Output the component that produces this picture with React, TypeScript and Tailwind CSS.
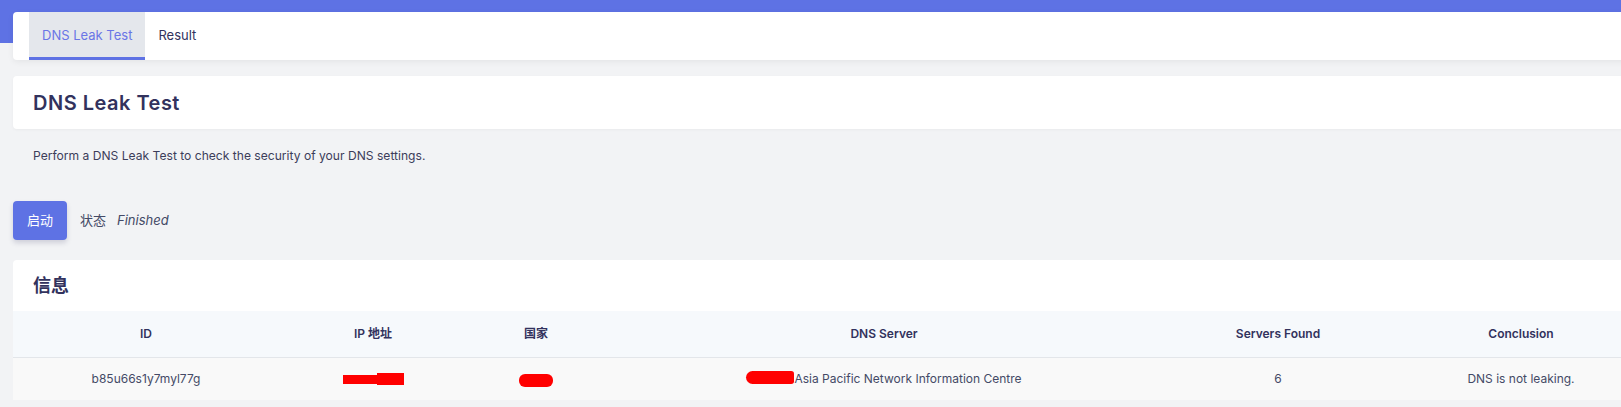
const columns = [
  { key: "id", label: "ID", width: "w-[266px]" },
  { key: "ip", label: "IP 地址", width: "w-[188px]" },
  { key: "country", label: "国家", width: "w-[138px]" },
  { key: "dns", label: "DNS Server", width: "w-[558px]" },
  { key: "found", label: "Servers Found", width: "w-[230px]" },
  { key: "conclusion", label: "Conclusion", width: "w-[256px]" },
];

function Redacted({ className }: { className: string }) {
  return <span className={`inline-block bg-[#ff0000] ${className}`} />;
}

export default function App() {
  return (
    <div
      className="h-[407px] w-full overflow-hidden bg-[#f2f3f5]"
      style={{ fontFamily: 'Inter, "Noto Sans CJK SC", sans-serif' }}
    >
      <div className="w-[1662px]">
        <div className="h-[43px] bg-[#5e72e4]" />

        <div className="-mt-[31px] px-[13px]">
          {/* tabs */}
          <div className="flex h-[48px] rounded-[4px] bg-white pl-[16px] shadow-[0_2px_6px_rgba(0,0,0,0.06)]">
            <div className="flex h-full items-center border-b-[3px] border-[#5e72e4] bg-[#e4e7ec] px-[13px] pt-[3px] text-[13px] text-[#6a75e6]">
              DNS Leak Test
            </div>
            <div className="flex h-full items-center px-[13px] text-[13px] text-[#32325d]">Result</div>
          </div>

          {/* title */}
          <div className="mt-[16px] flex h-[53px] items-center rounded-[4px] bg-white px-[20px] shadow-[0_1px_3px_rgba(0,0,0,0.04)]">
            <h1 className="text-[20px] font-semibold tracking-[0.025em] text-[#32325d]">DNS Leak Test</h1>
          </div>

          <p className="mt-[17px] px-[20px] text-[12.1px] leading-[20px] text-[#3c3d5a]">
            Perform a DNS Leak Test to check the security of your DNS settings.
          </p>

          <div className="mt-[35px] flex items-center">
            <button className="h-[39px] w-[54px] rounded-[4px] bg-[#5e72e4] text-[13px] text-white shadow-[0_3px_5px_rgba(50,50,93,0.18)]">
              启动
            </button>
            <span className="ml-[13px] text-[13px] text-[#444a66]">状态</span>
            <span className="ml-[11px] text-[13px] italic text-[#444a66]">Finished</span>
          </div>

          {/* info */}
          <div className="mt-[20px] overflow-hidden rounded-t-[4px] bg-white">
            <div className="flex h-[51px] items-center px-[20px]">
              <h2 className="text-[18px] font-bold text-[#32325d]">信息</h2>
            </div>
            <div className="flex h-[47px] border-b border-[#e3e6ea] bg-[#f6f9fc]">
              {columns.map((col) => (
                <div
                  key={col.key}
                  className={`${col.width} flex shrink-0 items-center justify-center whitespace-nowrap text-[12px] font-semibold text-[#32325d]`}
                >
                  {col.label}
                </div>
              ))}
            </div>
            <div className="flex h-[42px] bg-[#f9f9f9] text-[12px] text-[#444a66]">
              <div className="flex w-[266px] shrink-0 items-center justify-center">b85u66s1y7myl77g</div>
              <div className="flex w-[188px] shrink-0 items-center justify-center">
                <span className="flex items-center">
                  <Redacted className="h-[9px] w-[36px]" />
                  <Redacted className="-ml-[2px] h-[12px] w-[27px]" />
                </span>
              </div>
              <div className="flex w-[138px] shrink-0 items-center justify-center">
                <Redacted className="mt-[2px] h-[13px] w-[34px] rounded-[6px]" />
              </div>
              <div className="flex w-[558px] shrink-0 items-center justify-center whitespace-nowrap">
                <Redacted className="-mt-[4px] h-[13px] w-[48px] rounded-l-[7px] rounded-r-[3px]" />
                <span>Asia Pacific Network Information Centre</span>
              </div>
              <div className="flex w-[230px] shrink-0 items-center justify-center">6</div>
              <div className="flex w-[256px] shrink-0 items-center justify-center">DNS is not leaking.</div>
            </div>
          </div>
        </div>
      </div>
    </div>
  );
}
